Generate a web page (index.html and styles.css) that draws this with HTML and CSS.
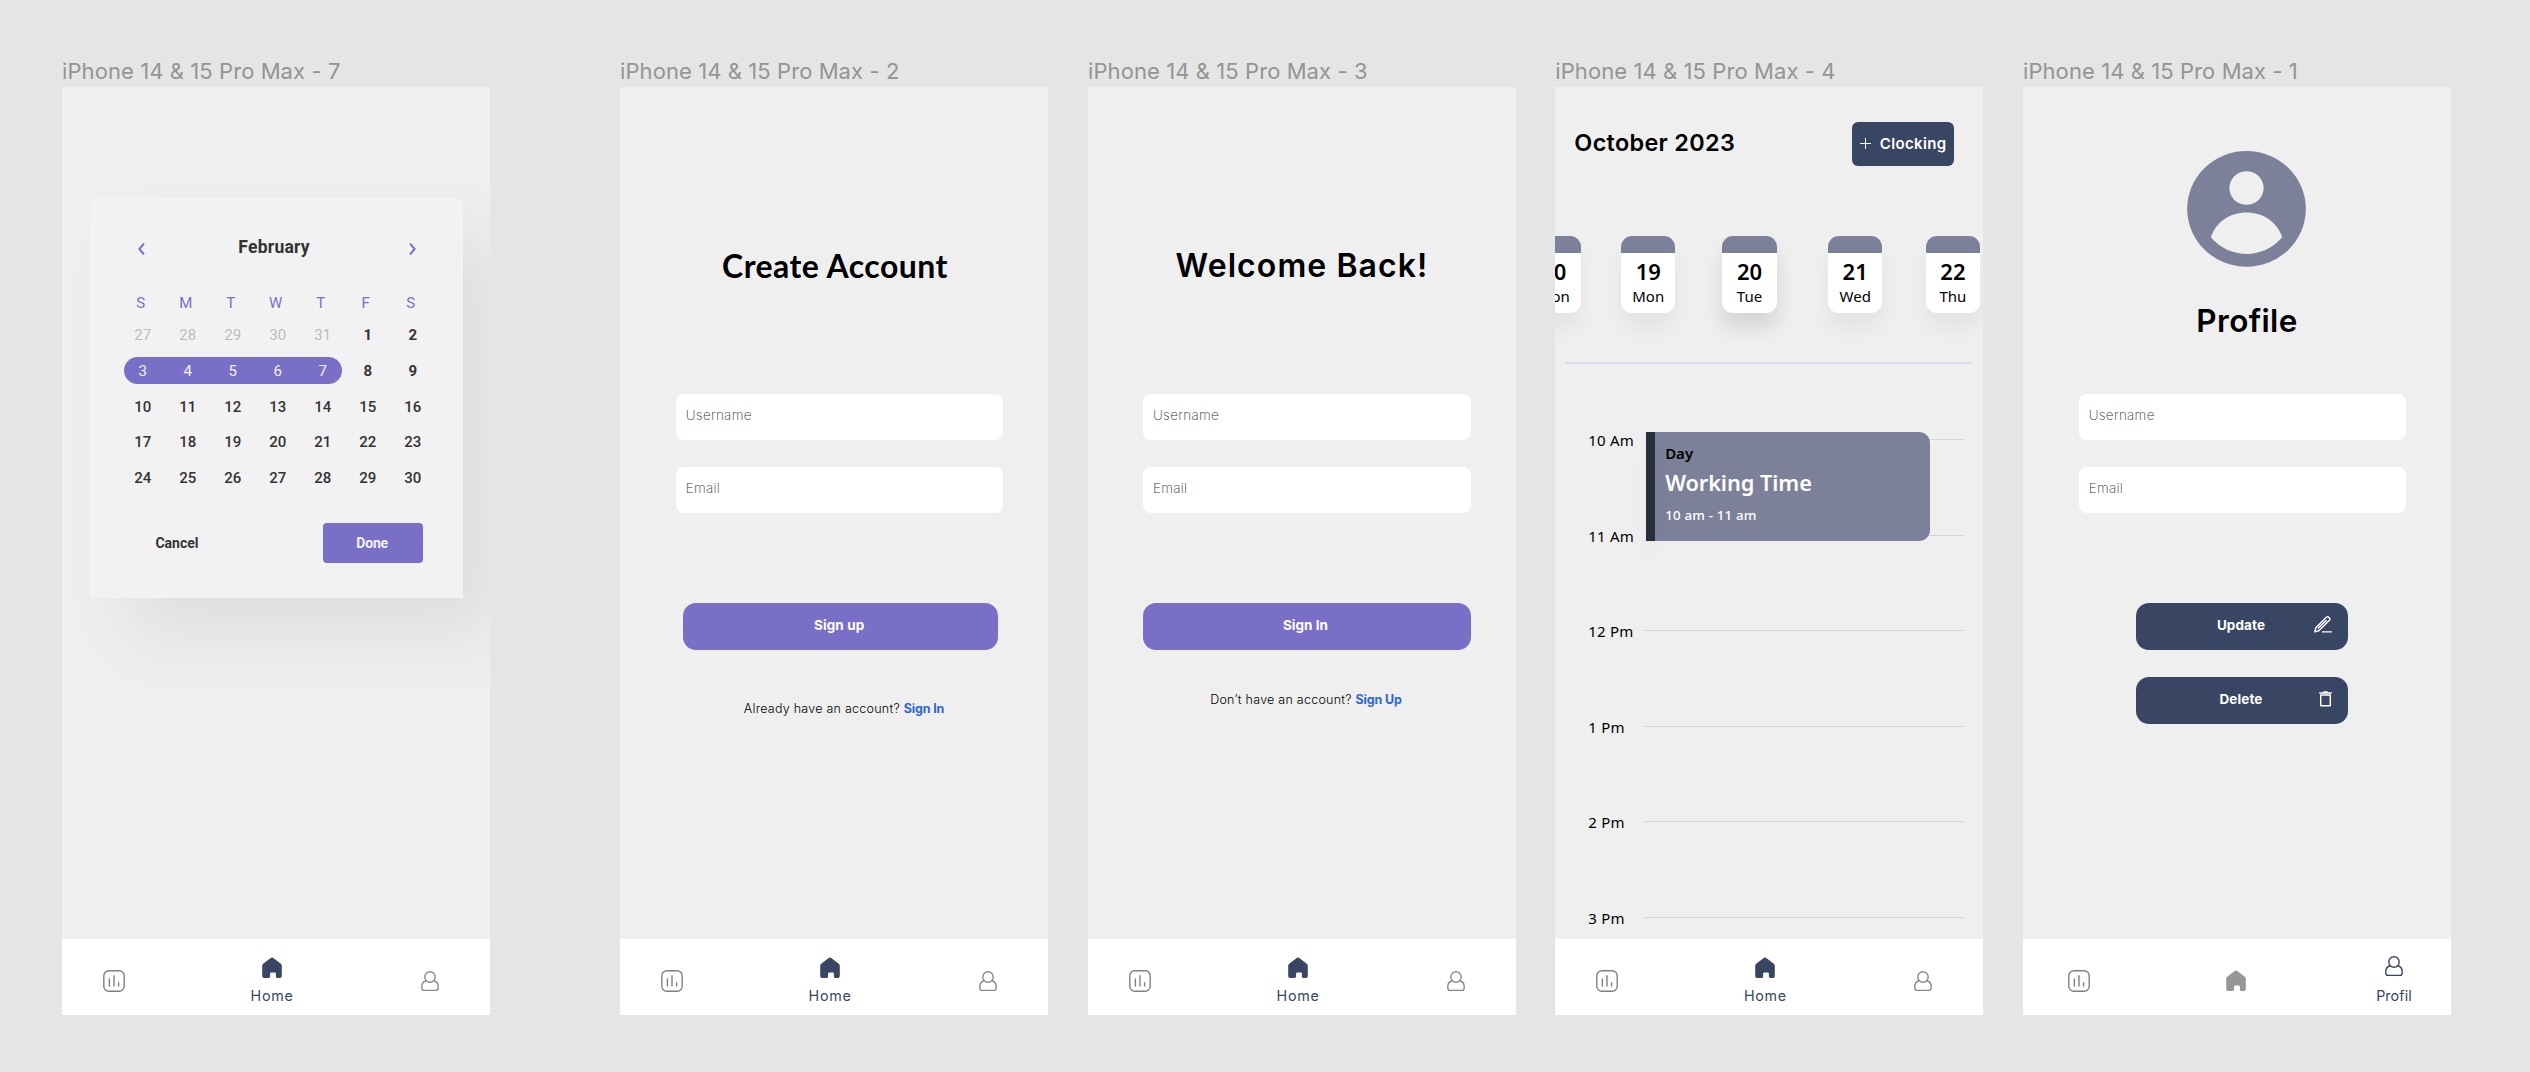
FILE: index.html
```html
<!DOCTYPE html>
<html lang="en">
<head>
<meta charset="utf-8">
<title>Time tracking app screens</title>
<link rel="stylesheet" href="styles.css">
</head>
<body>
<svg class="sprite" aria-hidden="true">
  <symbol id="i-chart" viewBox="0 0 22 22">
    <g fill="none" stroke="currentColor" stroke-width="1.400" stroke-linecap="round">
      <rect x=".8" y=".8" width="20.4" height="20.4" rx="5"/>
      <path d="M6.4 9v7M11 5.8V16M15.6 12.6V16"/>
    </g>
  </symbol>
  <symbol id="i-home" viewBox="0 0 22 22">
    <path fill="currentColor" d="M9.4 1.2a2.4 2.4 0 0 1 3.2 0l6.9 5.3c.9.7 1.3 1.6 1.3 2.6v9.4a2.6 2.6 0 0 1-2.6 2.6h-1.6a1.7 1.7 0 0 1-1.7-1.7v-2.6a1.2 1.2 0 0 0-1.2-1.2h-3.4a1.2 1.2 0 0 0-1.2 1.2v2.6a1.7 1.7 0 0 1-1.7 1.7H3.8a2.6 2.6 0 0 1-2.6-2.6V9.100c0-1 .4-1.900 1.300-2.600z"/>
  </symbol>
  <symbol id="i-user" viewBox="0 0 22 22">
    <g fill="none" stroke="currentColor" stroke-width="1.400">
      <circle cx="11" cy="7" r="5.200"/>
      <path d="M7.300 10.700C4.500 11.300 2.800 13.500 2.800 16.500v1.500c0 1.600.9 2.400 2.400 2.400h11.600c1.500 0 2.400-.8 2.400-2.400v-1.500c0-3-1.700-5.200-4.500-5.800"/>
    </g>
  </symbol>
</svg>

<main class="stage">
  <section class="artboard">
    <h2 class="artboard-name">iPhone 14 &amp; 15 Pro Max - 7</h2>
    <div class="screen">
      <div class="calendar">
        <div class="calendar-head">
          <svg class="chevron" viewBox="0 0 7 12"><path d="M5.900.500 1.400 6l4.500 5.500"/></svg>
          <span class="month">February</span>
          <svg class="chevron" viewBox="0 0 7 12"><path d="M1.100.500 5.600 6l-4.500 5.500"/></svg>
        </div>
        <div class="weekdays"><span>S</span><span>M</span><span>T</span><span>W</span><span>T</span><span>F</span><span>S</span></div>
        <div class="week"><span class="out">27</span><span class="out">28</span><span class="out">29</span><span class="out">30</span><span class="out">31</span><b>1</b><b>2</b></div>
        <div class="week has-range"><span class="picked">3</span><span class="picked">4</span><span class="picked">5</span><span class="picked">6</span><span class="picked">7</span><b>8</b><b>9</b></div>
        <div class="week"><span>10</span><span>11</span><span>12</span><span>13</span><span>14</span><span>15</span><span>16</span></div>
        <div class="week"><span>17</span><span>18</span><span>19</span><span>20</span><span>21</span><span>22</span><span>23</span></div>
        <div class="week"><span>24</span><span>25</span><span>26</span><span>27</span><span>28</span><span>29</span><span>30</span></div>
        <div class="calendar-actions"><span class="cancel">Cancel</span><span class="done">Done</span></div>
      </div>
      <nav class="tabs">
        <div class="tab"><svg><use href="#i-chart"/></svg></div>
        <div class="tab active"><svg><use href="#i-home"/></svg><span>Home</span></div>
        <div class="tab cool"><svg><use href="#i-user"/></svg></div>
      </nav>
    </div>
  </section>

  <section class="artboard signup">
    <h2 class="artboard-name">iPhone 14 &amp; 15 Pro Max - 2</h2>
    <div class="screen">
      <h1 class="title create">Create Account</h1>
      <div class="fields"><div class="field">Username</div><div class="field">Email</div></div>
      <div class="button">Sign up</div>
      <p class="switch">Already have an account? <a>Sign In</a></p>
      <nav class="tabs">
        <div class="tab"><svg><use href="#i-chart"/></svg></div>
        <div class="tab active"><svg><use href="#i-home"/></svg><span>Home</span></div>
        <div class="tab cool"><svg><use href="#i-user"/></svg></div>
      </nav>
    </div>
  </section>

  <section class="artboard signin">
    <h2 class="artboard-name">iPhone 14 &amp; 15 Pro Max - 3</h2>
    <div class="screen">
      <h1 class="title welcome">Welcome Back!</h1>
      <div class="fields"><div class="field">Username</div><div class="field">Email</div></div>
      <div class="button">Sign In</div>
      <p class="switch">Don’t have an account? <a>Sign Up</a></p>
      <nav class="tabs">
        <div class="tab"><svg><use href="#i-chart"/></svg></div>
        <div class="tab active"><svg><use href="#i-home"/></svg><span>Home</span></div>
        <div class="tab cool"><svg><use href="#i-user"/></svg></div>
      </nav>
    </div>
  </section>

  <section class="artboard schedule">
    <h2 class="artboard-name">iPhone 14 &amp; 15 Pro Max - 4</h2>
    <div class="screen">
      <header class="schedule-head">
        <h1>October 2023</h1>
        <div class="clocking">
          <svg viewBox="0 0 11 11"><path d="M5.500 0v11M0 5.500h11"/></svg>
          <span>Clocking</span>
        </div>
      </header>
      <div class="days">
        <div class="day"><b>20</b><span>Mon</span></div>
        <div class="day"><b>19</b><span>Mon</span></div>
        <div class="day current"><b>20</b><span>Tue</span></div>
        <div class="day"><b>21</b><span>Wed</span></div>
        <div class="day"><b>22</b><span>Thu</span></div>
      </div>
      <hr class="divider">
      <div class="timeline">
        <div class="hour"><span>10 Am</span><i></i></div>
        <div class="hour"><span>11 Am</span><i></i></div>
        <div class="hour"><span>12 Pm</span><i></i></div>
        <div class="hour"><span>1 Pm</span><i></i></div>
        <div class="hour"><span>2 Pm</span><i></i></div>
        <div class="hour"><span>3 Pm</span><i></i></div>
        <div class="event">
          <span class="event-kind">Day</span>
          <span class="event-name">Working Time</span>
          <span class="event-time">10 am - 11 am</span>
        </div>
      </div>
      <nav class="tabs">
        <div class="tab"><svg><use href="#i-chart"/></svg></div>
        <div class="tab active"><svg><use href="#i-home"/></svg><span>Home</span></div>
        <div class="tab cool"><svg><use href="#i-user"/></svg></div>
      </nav>
    </div>
  </section>

  <section class="artboard profile">
    <h2 class="artboard-name">iPhone 14 &amp; 15 Pro Max - 1</h2>
    <div class="screen">
      <svg class="avatar" viewBox="0 0 119 116">
        <ellipse cx="59.500" cy="58" rx="59.500" ry="58" fill="#7d8099"/>
        <ellipse cx="59.500" cy="37.200" rx="17.200" ry="16.800" fill="#efefef"/>
        <path d="M23.700 86.500C29 71 43 61.700 59.500 61.700S90 71 95.300 86.500C86 97.500 73 103.200 59.500 103.200S33 97.500 23.700 86.500z" fill="#efefef"/>
      </svg>
      <h1 class="title">Profile</h1>
      <div class="fields"><div class="field">Username</div><div class="field">Email</div></div>
      <div class="button">Update
        <svg class="pen" viewBox="0 0 18 17"><path d="M.8 15.800l1-4L12.400 1.300a1.600 1.600 0 0 1 2.300 0l.7.7a1.600 1.600 0 0 1 0 2.300L4.800 14.800zM4.300 12.100l7.900-7.700M8.500 15.900h8.800"/></svg>
      </div>
      <div class="button">Delete
        <svg class="bin" viewBox="0 0 13 16"><path d="M1.700 4h9.600v10.700H1.700z" stroke-linejoin="round"/><path d="M.200 2h12.600M4.300.900h4.400"/></svg>
      </div>
      <nav class="tabs">
        <div class="tab"><svg><use href="#i-chart"/></svg></div>
        <div class="tab"><svg><use href="#i-home"/></svg></div>
        <div class="tab active"><svg><use href="#i-user"/></svg><span>Profil</span></div>
      </nav>
    </div>
  </section>
</main>
</body>
</html>
```
FILE: styles.css
```css
* { box-sizing: border-box; }

body {
  margin: 0;
  background: #e5e5e5;
  font-family: Inter, "Liberation Sans", sans-serif;
  color: #000;
}

h1, h2, p { margin: 0; font-weight: 400; }

.sprite { display: none; }

.stage {
  display: flex;
  height: 1072px;
  padding: 55.300px 0 0 62px;
  overflow: hidden;
}

.artboard { flex: none; width: 428px; }
.signup { margin-left: 130px; }
.signin { margin-left: 40px; }
.schedule { margin-left: 39.330px; }
.profile { margin-left: 39.670px; }

.artboard-name {
  height: 32px;
  font-size: 22px;
  line-height: 32px;
  letter-spacing: .08px;
  color: #949494;
  white-space: nowrap;
}

.screen {
  display: flex;
  flex-direction: column;
  height: 927.400px;
  background: #efefef;
  overflow: hidden;
}

/* Bottom navigation */
.tabs {
  display: flex;
  flex: none;
  justify-content: space-between;
  align-items: flex-start;
  height: 75.700px;
  margin-top: auto;
  padding: 0 10px 0 2px;
  background: #fff;
  position: relative;
}
.tab {
  display: flex;
  flex-direction: column;
  align-items: center;
  width: 100px;
  padding-top: 30.500px;
  color: #808080;
}
.tab svg { width: 22px; height: 22px; }
.tab.cool { color: #838c92; }
.profile .tab:nth-child(2) { color: #969696; }
.tab.active { padding-top: 17.500px; color: #384563; }
.tab span {
  margin-top: 6.500px;
  font-size: 14.300px;
  font-weight: 400;
  line-height: 21px;
  letter-spacing: .7px;
}
.profile .tab.active { padding-top: 15.700px; }
.profile .tabs { padding: 0 7px 0 6px; }
.profile .tab.active span { margin-top: 8.300px; letter-spacing: .1px; }

/* Date picker */
.calendar {
  width: 373px;
  height: 400px;
  margin: 110.300px 0 0 28px;
  padding: 33.800px 27.800px 0 30.200px;
  border-radius: 8px 8px 0 0;
  background: #f2f2f2;
  box-shadow: 38px 38px 76px rgba(0, 0, 0, .070);
  font-family: Roboto, sans-serif;
  font-size: 15px;
  color: #333;
}
.calendar-head {
  display: flex;
  justify-content: space-between;
  align-items: center;
  height: 32px;
  padding: 0 19.500px 0 18.300px;
}
.chevron {
  width: 7px;
  height: 12px;
  margin-top: 3px;
  fill: none;
  stroke: #7a6fc7;
  stroke-width: 2;
}
.month {
  margin-right: 6px;
  font-size: 17.500px;
  font-weight: 700;
  letter-spacing: .25px;
}
.weekdays, .week { display: flex; width: 315px; }
.weekdays > *, .week > * { width: 45px; text-align: center; }
.weekdays {
  height: 30px;
  margin: 23.350px 0 0 -2px;
  line-height: 33px;
  color: #7a6fc7;
}
.week {
  height: 35.900px;
  line-height: 36.400px;
  font-weight: 500;
}
.week b { font-weight: 700; }
.week .out { font-weight: 400; color: #bdbdbd; }
.week .picked { position: relative; font-weight: 400; color: #f2f2f2; }
.has-range { position: relative; }
.has-range::before {
  content: "";
  position: absolute;
  top: 4.300px;
  left: 3.500px;
  width: 218.300px;
  height: 26.700px;
  border-radius: 14px;
  background: #7a6fc7;
}
.calendar-actions {
  display: flex;
  gap: 95.700px;
  margin-top: 26.650px;
  padding-left: 6.800px;
  font-size: 14px;
  font-weight: 700;
  line-height: 41px;
  text-align: center;
}
.calendar-actions span { flex: none; width: 100px; height: 40px; }
.calendar-actions .done {
  padding-right: 1px;
  border-radius: 4px;
  background: #7a6fc7;
  color: #f2f2f2;
  letter-spacing: -.2px;
}

/* Forms */
.title {
  margin-top: 159px;
  font-size: 31.500px;
  font-weight: 600;
  line-height: 40px;
  letter-spacing: .350px;
  text-align: center;
}
.create {
  padding-left: 2px;
  font-family: Lato, sans-serif;
  font-size: 32px;
  font-weight: 700;
  letter-spacing: .450px;
}
.welcome { font-size: 32px; letter-spacing: 1.080px; }
.fields {
  display: flex;
  flex-direction: column;
  gap: 27.700px;
  width: 327.300px;
  margin: 107.400px 0 0 56px;
}
.field {
  height: 46px;
  padding-left: 9.700px;
  border-radius: 8px;
  background: #fff;
  font-size: 13.500px;
  font-weight: 200;
  line-height: 43px;
  letter-spacing: .280px;
  color: #333;
}
.button {
  width: 327.300px;
  height: 47px;
  margin: 89.300px 0 0 55.300px;
  padding-right: 3px;
  border-radius: 13px;
  background: #7a6fc7;
  font-size: 13.500px;
  font-weight: 700;
  line-height: 44px;
  letter-spacing: .1px;
  text-align: center;
  color: #fff;
}
.signup .button { width: 315.300px; margin-left: 63px; }
.signin .fields { margin-left: 55.300px; }
.signin .button { letter-spacing: 0; }
.switch {
  margin-top: 49px;
  padding-left: 20px;
  font-size: 12.500px;
  font-weight: 300;
  line-height: 20px;
  letter-spacing: .250px;
  text-align: center;
}
.signin .switch { margin-top: 40px; padding-left: 8px; }
.switch a { font-weight: 700; letter-spacing: -.150px; color: #2c66d1; }

/* Profile */
.avatar { flex: none; width: 119px; height: 115.700px; margin: 63.700px 0 0 164px; }
.profile .title { margin-top: 34.800px; padding-left: 20px; }
.profile .fields { margin-top: 52.200px; }
.profile .button {
  position: relative;
  width: 212px;
  margin-left: 113px;
  padding-right: 2px;
  background: #384563;
}
.profile .button + .button { margin-top: 27.500px; }
.button svg { position: absolute; fill: none; stroke: #fff; stroke-width: 1.4; }
.pen { top: 13.300px; right: 15.500px; width: 18px; height: 17px; stroke-linejoin: round; stroke-linecap: round; }
.bin { top: 14px; right: 16px; width: 13px; height: 16px; }

/* Schedule */
.schedule-head {
  display: flex;
  justify-content: space-between;
  padding: 34.700px 29.800px 0 19px;
}
.schedule-head h1 {
  font-size: 23.400px;
  font-weight: 600;
  line-height: 41px;
  letter-spacing: .320px;
}
.clocking {
  display: flex;
  align-items: center;
  gap: 9.300px;
  width: 101.500px;
  height: 44px;
  padding-left: 7.500px;
  border-radius: 6px;
  background: #384563;
  font-size: 15px;
  font-weight: 600;
  letter-spacing: .360px;
  color: #fff;
}
.clocking svg { flex: none; width: 11px; height: 11px; stroke: #fff; }
.days {
  display: flex;
  margin: 70.300px 0 0 -28.700px;
  font-family: "Noto Sans", sans-serif;
}
.day {
  display: flex;
  flex: none;
  flex-direction: column;
  align-items: center;
  width: 54.400px;
  height: 76.300px;
  margin-right: 43.300px;
  padding-top: 19.700px;
  border-radius: 11px;
  background: linear-gradient(#7d8099 17.500px, #fff 17.500px);
  box-shadow: 0 15px 20px rgba(0, 0, 0, .05);
}
.day:nth-child(1) { margin-right: 40px; }
.day:nth-child(2) { margin-right: 46.900px; }
.day:nth-child(3) { margin-right: 51.300px; }
.day.current { box-shadow: 0 15px 20px rgba(0, 0, 0, .11); }
.day b { font-size: 22px; font-weight: 600; line-height: 30px; }
.day span { margin-top: .5px; font-size: 15px; line-height: 20px; }
.divider {
  flex: none;
  width: 407px;
  height: 2px;
  margin: 49.300px 0 0 10px;
  border: 0;
  background: #dcdbea;
}
.timeline {
  position: relative;
  flex: none;
  height: 508px;
  margin: 66.200px 0 0 33px;
  font-family: "Noto Sans", sans-serif;
}
.hour { display: flex; height: 95.600px; }
.hour:nth-child(6) { height: 20px; }
.hour span { width: 56.300px; font-size: 15px; line-height: 20px; letter-spacing: .2px; white-space: nowrap; }
.hour i { width: 318px; height: 1px; margin-top: 9px; background: #d1d0e4; }
.event {
  position: absolute;
  top: 2.300px;
  left: 57.300px;
  display: flex;
  flex-direction: column;
  width: 284.700px;
  height: 108.700px;
  padding: 10.500px 0 0 19.500px;
  border-radius: 0 11px 11px 0;
  background: #7d8099;
  color: #fff;
}
.event::before {
  content: "";
  position: absolute;
  inset: 0 auto 0 0;
  width: 9px;
  background: #282f3f;
  box-shadow: 0 15px 20px rgba(0, 0, 0, .04);
}
.event-kind { font-size: 15px; font-weight: 600; line-height: 20px; color: #000; }
.event-name { margin-top: 5px; font-size: 21.800px; font-weight: 600; line-height: 30px; letter-spacing: -.080px; }
.event-time { margin-top: 7.500px; font-size: 13.300px; font-weight: 500; line-height: 20px; letter-spacing: .200px; }
```
